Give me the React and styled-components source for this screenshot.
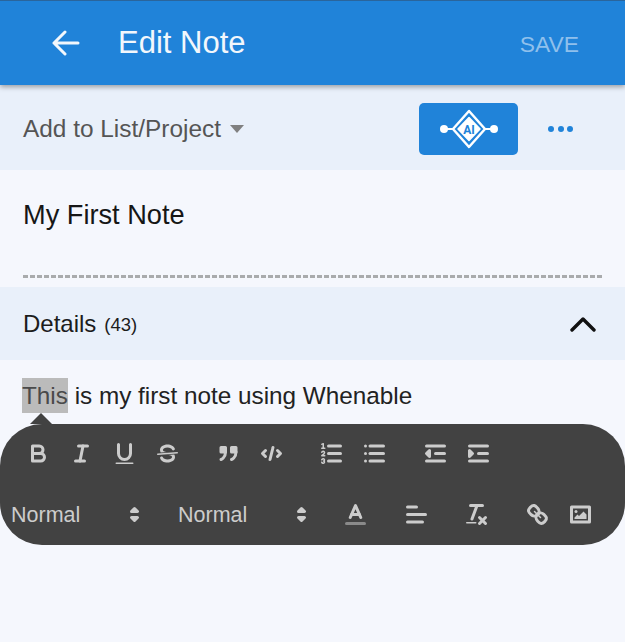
import React from 'react';
import styled, { createGlobalStyle } from 'styled-components';

const GlobalStyle = createGlobalStyle`
  html, body {
    margin: 0;
    padding: 0;
    background: #f5f7fd;
  }
  body {
    font-family: "Liberation Sans", Arial, sans-serif;
  }
`;

const Page = styled.div`
  width: 625px;
  height: 642px;
  overflow: hidden;
  display: flex;
  flex-direction: column;
  background: #f5f7fd;
`;

const Header = styled.header`
  position: relative;
  z-index: 2;
  height: 85px;
  box-sizing: border-box;
  border-top: 1px solid #2a659c;
  padding: 0 46px 0 52px;
  display: flex;
  align-items: center;
  background: #2083d9;
  box-shadow: 0 2px 5px rgba(0, 0, 0, 0.35);
`;

const Title = styled.h1`
  margin: 0 0 0 38px;
  flex: 1;
  font-size: 31px;
  font-weight: 400;
  color: #f2f7fc;
`;

const SaveButton = styled.span`
  margin-top: 2px;
  font-size: 22.8px;
  color: #8fc0ec;
`;

const ListBar = styled.div`
  height: 85px;
  box-sizing: border-box;
  padding: 2px 52px 0 23px;
  display: flex;
  align-items: center;
  background: #e9f0fa;
`;

const ListLabel = styled.span`
  font-size: 24.4px;
  color: #555;
`;

const Caret = styled.span`
  margin: 0 0 0 9px;
  border-left: 7.5px solid transparent;
  border-right: 7.5px solid transparent;
  border-top: 8px solid #808080;
`;

const AiButton = styled.button`
  margin-left: auto;
  width: 99px;
  height: 52px;
  padding: 0;
  border: none;
  border-radius: 5px;
  display: flex;
  align-items: center;
  justify-content: center;
  background: #2083d9;
`;

const MoreDots = styled.div`
  margin-left: 30px;
  display: flex;
  gap: 3.5px;
`;

const Dot = styled.span`
  width: 6px;
  height: 6px;
  border-radius: 50%;
  background: #2083d9;
`;

const TitleSection = styled.div`
  height: 117px;
  box-sizing: border-box;
  padding: 27px 22px 0 23px;
  display: flex;
  flex-direction: column;
`;

const NoteTitle = styled.div`
  font-size: 27.2px;
  line-height: 36px;
  color: #161616;
`;

const Dashes = styled.div`
  margin-top: 42px;
  height: 3px;
  background: repeating-linear-gradient(to right, #a9abad 0 5px, transparent 5px 7px);
`;

const DetailsBar = styled.div`
  height: 73px;
  box-sizing: border-box;
  padding: 0 29px 0 23px;
  display: flex;
  align-items: center;
  justify-content: space-between;
  background: #e9f0fa;
`;

const DetailsLabel = styled.span`
  font-size: 24px;
  color: #1c1c1c;
`;

const Count = styled.span`
  margin-left: 8px;
  font-size: 18.5px;
  position: relative;
  top: -1px;
`;

const Editor = styled.div`
  position: relative;
  flex: 1;
  padding: 18px 0 0 22px;
`;

const BodyText = styled.p`
  margin: 0;
  font-size: 24.3px;
  line-height: 35px;
  color: #222;
`;

const Selected = styled.span`
  display: inline-block;
  background: #bbbbbb;
  color: #4a4a4a;
`;

const Tooltip = styled.div`
  position: absolute;
  left: 0;
  top: 64px;
  width: 625px;
  height: 121px;
  box-sizing: border-box;
  padding: 7px 0 0;
  border-radius: 42px;
  background: #424242;

  &::before {
    content: '';
    position: absolute;
    left: 30px;
    top: -11px;
    border-left: 11px solid transparent;
    border-right: 11px solid transparent;
    border-bottom: 11px solid #424242;
  }
`;

const ToolRow = styled.div`
  height: 44px;
  display: flex;
  align-items: center;
  padding-left: ${props => props.$inset || 0}px;
  margin-bottom: ${props => props.$gap || 0}px;
`;

const ToolGroup = styled.div`
  display: flex;
  align-items: center;
  margin-right: 17.5px;
`;

const ToolButton = styled.span`
  width: 43px;
  height: 40px;
  display: flex;
  align-items: center;
  justify-content: center;
`;

const Picker = styled.span`
  width: 167px;
  box-sizing: border-box;
  padding: 0 19px 0 11px;
  display: flex;
  align-items: center;
  justify-content: space-between;
  font-size: 21.5px;
  color: #ccc;
`;

const PickerLabel = styled.span`
  padding-top: 2px;
`;

const QuillSvg = styled.svg`
  width: ${props => props.$size || 27}px;
  height: ${props => props.$size || 27}px;
  fill: none;
  stroke: #ccc;
  stroke-width: 2;
  stroke-linecap: round;
  stroke-linejoin: round;

  .thin {
    stroke-width: 1;
  }
  .fill {
    fill: #ccc;
    stroke: none;
  }
  .both {
    fill: #ccc;
  }
`;

const Icon = ({ size, children }) => (
  <QuillSvg viewBox="0 0 18 18" $size={size}>{children}</QuillSvg>
);

const BoldIcon = () => (
  <Icon>
    <path d="M5,4H9.5A2.5,2.5,0,0,1,12,6.5v0A2.5,2.5,0,0,1,9.5,9H5A0,0,0,0,1,5,9V4A0,0,0,0,1,5,4Z" />
    <path d="M5,9h5.5A2.5,2.5,0,0,1,13,11.5v0A2.5,2.5,0,0,1,10.5,14H5a0,0,0,0,1,0,0V9A0,0,0,0,1,5,9Z" />
  </Icon>
);

const ItalicIcon = () => (
  <Icon>
    <line x1="7" x2="13" y1="4" y2="4" />
    <line x1="5" x2="11" y1="14" y2="14" />
    <line x1="8" x2="10" y1="14" y2="4" />
  </Icon>
);

const UnderlineIcon = () => (
  <Icon>
    <path d="M5,3V9a4.012,4.012,0,0,0,4,4H9a4.012,4.012,0,0,0,4-4V3" />
    <rect className="fill" height="1" rx="0.5" ry="0.5" width="12" x="3" y="15" />
  </Icon>
);

const StrikeIcon = () => (
  <Icon>
    <line className="thin" x1="15.5" x2="2.5" y1="8.5" y2="9.5" />
    <path className="fill" d="M9.007,8C6.542,7.791,6,7.519,6,6.5,6,5.792,7.283,5,9,5c1.571,0,2.765.679,2.969,1.309a1,1,0,0,0,1.9-.617C13.356,4.106,11.354,3,9,3,6.2,3,4,4.538,4,6.5a3.2,3.2,0,0,0,.5,1.843Z" />
    <path className="fill" d="M8.984,10C11.457,10.208,12,10.479,12,11.5c0,.708-1.283,1.5-3,1.5-1.571,0-2.765-.679-2.969-1.309a1,1,0,1,0-1.9.617C4.644,13.894,6.646,15,9,15c2.8,0,5-1.538,5-3.5a3.2,3.2,0,0,0-.5-1.843Z" />
  </Icon>
);

const QuoteIcon = () => (
  <Icon>
    <rect className="both" height="3" width="3" x="4" y="5" />
    <rect className="both" height="3" width="3" x="11" y="5" />
    <path d="M7,8c0,4.031-3,5-3,5" />
    <path d="M14,8c0,4.031-3,5-3,5" />
  </Icon>
);

const CodeIcon = () => (
  <Icon>
    <polyline points="5 7 3 9 5 11" />
    <polyline points="13 7 15 9 13 11" />
    <line x1="10" x2="8" y1="5" y2="13" />
  </Icon>
);

const OrderedIcon = () => (
  <Icon>
    <line x1="7" x2="15" y1="4" y2="4" />
    <line x1="7" x2="15" y1="9" y2="9" />
    <line x1="7" x2="15" y1="14" y2="14" />
    <line className="thin" x1="2.5" x2="4.5" y1="5.5" y2="5.5" />
    <path className="fill" d="M3.5,6A0.5,0.5,0,0,1,3,5.5V3.085l-0.276.138A0.5,0.5,0,0,1,2.053,3c-0.124-.247-0.023-0.324.224-0.447l1-.5A0.5,0.5,0,0,1,4,2.5v3A0.5,0.5,0,0,1,3.5,6Z" />
    <path className="thin" d="M4.5,10.5h-2c0-.234,1.85-1.076,1.85-2.234A0.959,0.959,0,0,0,2.5,8.156" />
    <path className="thin" d="M2.5,14.846a0.959,0.959,0,0,0,1.85-.109A0.7,0.7,0,0,0,3.75,14a0.688,0.688,0,0,0,.6-0.736,0.959,0.959,0,0,0-1.85-.109" />
  </Icon>
);

const BulletIcon = () => (
  <Icon>
    <line x1="6" x2="15" y1="4" y2="4" />
    <line x1="6" x2="15" y1="9" y2="9" />
    <line x1="6" x2="15" y1="14" y2="14" />
    <line x1="3" x2="3" y1="4" y2="4" />
    <line x1="3" x2="3" y1="9" y2="9" />
    <line x1="3" x2="3" y1="14" y2="14" />
  </Icon>
);

const OutdentIcon = () => (
  <Icon>
    <line x1="3" x2="15" y1="14" y2="14" />
    <line x1="3" x2="15" y1="4" y2="4" />
    <line x1="9" x2="15" y1="9" y2="9" />
    <polyline className="both" points="5 7 5 11 3 9 5 7" />
  </Icon>
);

const IndentIcon = () => (
  <Icon>
    <line x1="3" x2="15" y1="14" y2="14" />
    <line x1="3" x2="15" y1="4" y2="4" />
    <line x1="9" x2="15" y1="9" y2="9" />
    <polyline className="both" points="3 7 3 11 5 9 3 7" />
  </Icon>
);

const PickerArrows = () => (
  <Icon size={27}>
    <polygon className="both" points="7 11 9 13 11 11 7 11" />
    <polygon className="both" points="7 7 9 5 11 7 7 7" />
  </Icon>
);

const ColorIcon = () => (
  <Icon>
    <line x1="3" x2="15" y1="15" y2="15" stroke="#8a8a8a" />
    <polyline points="5.5 11 9 3 12.5 11" />
    <line x1="11.63" x2="6.38" y1="9" y2="9" />
  </Icon>
);

const AlignIcon = () => (
  <Icon>
    <line x1="3" x2="15" y1="9" y2="9" />
    <line x1="3" x2="13" y1="14" y2="14" />
    <line x1="3" x2="9" y1="4" y2="4" />
  </Icon>
);

const CleanIcon = () => (
  <Icon>
    <line x1="5" x2="13" y1="3" y2="3" />
    <line x1="6" x2="9.35" y1="12" y2="3" />
    <line x1="11" x2="15" y1="11" y2="15" />
    <line x1="15" x2="11" y1="11" y2="15" />
    <rect className="fill" height="1" rx="0.5" ry="0.5" width="7" x="2" y="14" />
  </Icon>
);

const LinkIcon = () => (
  <Icon>
    <line className="thin" x1="7" x2="11" y1="7" y2="11" />
    <path d="M8.9,4.577a3.476,3.476,0,0,1,.36,4.679A3.476,3.476,0,0,1,4.577,8.9C3.185,7.5,2.035,6.4,4.217,4.217S7.5,3.185,8.9,4.577Z" />
    <path d="M13.423,9.1a3.476,3.476,0,0,0-4.679-.36,3.476,3.476,0,0,0,.36,4.679c1.392,1.392,2.5,2.542,4.679.36S14.815,10.5,13.423,9.1Z" />
  </Icon>
);

const ImageIcon = () => (
  <Icon>
    <rect height="10" width="12" x="3" y="4" />
    <circle className="fill" cx="6" cy="7" r="1" />
    <polyline className="fill" points="5 12 5 11 7 9 8 10 11 7 13 9 13 12 5 12" />
  </Icon>
);

const BackArrow = () => (
  <svg width="28" height="26" viewBox="0 0 28 26" fill="none" stroke="#f2f7fc" strokeWidth="3" strokeLinecap="round" strokeLinejoin="round">
    <path d="M26 13H2M13 2L2 13l11 11" />
  </svg>
);

const AiMark = () => (
  <svg width="60" height="40" viewBox="0 0 60 40">
    <circle cx="5" cy="20" r="4" fill="#fff" />
    <circle cx="55" cy="20" r="4" fill="#fff" />
    <path d="M5 20H14M46 20H55" stroke="#fff" strokeWidth="2" />
    <path d="M30 2L46 20 30 38 14 20Z" fill="none" stroke="#fff" strokeWidth="2.5" strokeLinejoin="round" />
    <path d="M30 8.5L41 20 30 31.5 19 20Z" fill="#fff" stroke="#fff" strokeWidth="1.5" strokeLinejoin="round" />
    <text x="30" y="24.5" textAnchor="middle" fontFamily="Roboto, sans-serif" fontSize="12" fontWeight="700" fill="#2083d9">AI</text>
  </svg>
);

const Chevron = () => (
  <svg width="26" height="16" viewBox="0 0 26 16" fill="none" stroke="#111" strokeWidth="3.4" strokeLinecap="round" strokeLinejoin="round">
    <path d="M2 14L13 3l11 11" />
  </svg>
);

const tool = (IconPart, name) => <ToolButton key={name}><IconPart /></ToolButton>;

const App = () => {
  return (
    <Page>
      <GlobalStyle />
      <Header>
        <BackArrow />
        <Title>Edit Note</Title>
        <SaveButton>SAVE</SaveButton>
      </Header>
      <ListBar>
        <ListLabel>Add to List/Project</ListLabel>
        <Caret />
        <AiButton><AiMark /></AiButton>
        <MoreDots>
          <Dot />
          <Dot />
          <Dot />
        </MoreDots>
      </ListBar>
      <TitleSection>
        <NoteTitle>My First Note</NoteTitle>
        <Dashes />
      </TitleSection>
      <DetailsBar>
        <DetailsLabel>Details<Count>(43)</Count></DetailsLabel>
        <Chevron />
      </DetailsBar>
      <Editor>
        <BodyText><Selected>This</Selected> is my first note using Whenable</BodyText>
        <Tooltip>
          <ToolRow $inset={17} $gap={17}>
            <ToolGroup>
              {tool(BoldIcon, 'bold')}
              {tool(ItalicIcon, 'italic')}
              {tool(UnderlineIcon, 'underline')}
              {tool(StrikeIcon, 'strike')}
            </ToolGroup>
            <ToolGroup>
              {tool(QuoteIcon, 'quote')}
              {tool(CodeIcon, 'code')}
            </ToolGroup>
            <ToolGroup>
              {tool(OrderedIcon, 'ordered')}
              {tool(BulletIcon, 'bullet')}
            </ToolGroup>
            <ToolGroup>
              {tool(OutdentIcon, 'outdent')}
              {tool(IndentIcon, 'indent')}
            </ToolGroup>
          </ToolRow>
          <ToolRow>
            <Picker><PickerLabel>Normal</PickerLabel><PickerArrows /></Picker>
            <Picker><PickerLabel>Normal</PickerLabel><PickerArrows /></Picker>
            <ToolGroup>{tool(ColorIcon, 'color')}</ToolGroup>
            <ToolGroup>{tool(AlignIcon, 'align')}</ToolGroup>
            <ToolGroup>{tool(CleanIcon, 'clean')}</ToolGroup>
            <ToolGroup>
              {tool(LinkIcon, 'link')}
              {tool(ImageIcon, 'image')}
            </ToolGroup>
          </ToolRow>
        </Tooltip>
      </Editor>
    </Page>
  );
};

export default App;
